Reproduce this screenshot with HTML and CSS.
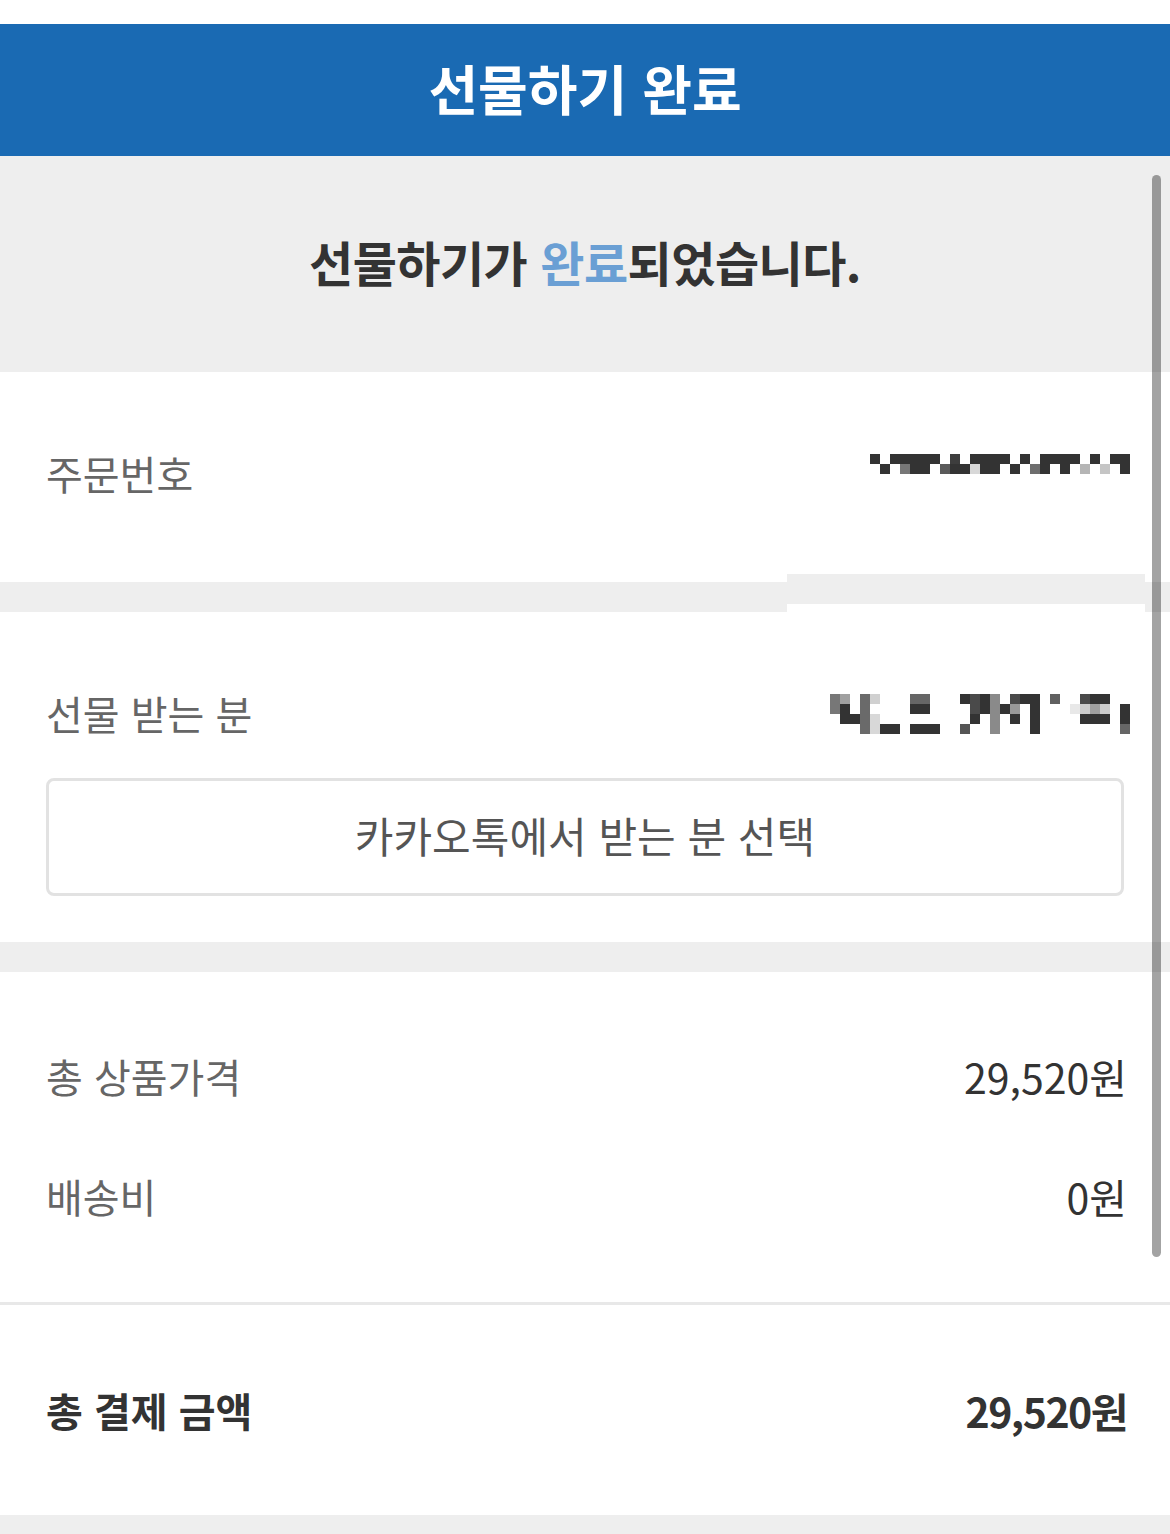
FILE: index.html
```html
<!DOCTYPE html>
<html lang="ko">
<head>
  <meta charset="UTF-8">
  <meta name="viewport" content="width=device-width, initial-scale=1.0">
  <title>선물하기 완료</title>
  <link rel="stylesheet" href="styles.css">
</head>
<body>
  <div class="page">
    <div class="top-gap"></div>
    <header class="title-bar">
      <h1>선물하기 완료</h1>
    </header>

    <div class="notice">
      <p>선물하기가 <span class="accent">완료</span>되었습니다.</p>
    </div>

    <section class="block block-order">
      <div class="row">
        <span class="label">주문번호</span>
        <svg class="mosaic mosaic-order" width="260" height="20" viewBox="0 0 260 20">
          <rect x="0" y="0" width="10" height="10" fill="#333"/>
          <rect x="20" y="0" width="50" height="10" fill="#333"/>
          <rect x="80" y="0" width="10" height="10" fill="#3d3d3d"/>
          <rect x="100" y="0" width="40" height="10" fill="#333"/>
          <rect x="150" y="0" width="10" height="10" fill="#333"/>
          <rect x="170" y="0" width="40" height="10" fill="#333"/>
          <rect x="220" y="0" width="10" height="10" fill="#333"/>
          <rect x="240" y="0" width="20" height="10" fill="#333"/>
          <rect x="10" y="10" width="10" height="10" fill="#333"/>
          <rect x="30" y="10" width="10" height="10" fill="#777"/>
          <rect x="40" y="10" width="20" height="10" fill="#333"/>
          <rect x="70" y="10" width="10" height="10" fill="#5a5a5a"/>
          <rect x="80" y="10" width="20" height="10" fill="#333"/>
          <rect x="100" y="10" width="10" height="10" fill="#d8d8d8"/>
          <rect x="110" y="10" width="20" height="10" fill="#333"/>
          <rect x="140" y="10" width="10" height="10" fill="#333"/>
          <rect x="160" y="10" width="10" height="10" fill="#6e6e6e"/>
          <rect x="170" y="10" width="10" height="10" fill="#333"/>
          <rect x="190" y="10" width="10" height="10" fill="#333"/>
          <rect x="210" y="10" width="10" height="10" fill="#b5b5b5"/>
          <rect x="230" y="10" width="10" height="10" fill="#c5c5c5"/>
          <rect x="250" y="10" width="10" height="10" fill="#333"/>
        </svg>
      </div>
    </section>

    <div class="divider divider-glitch"></div>

    <section class="block block-recipient">
      <div class="row">
        <span class="label">선물 받는 분</span>
        <svg class="mosaic mosaic-name" width="300" height="40" viewBox="0 0 300 40">
          <rect x="0" y="0" width="10" height="10" fill="#777"/>
          <rect x="10" y="0" width="10" height="10" fill="#a0a0a0"/>
          <rect x="30" y="0" width="10" height="10" fill="#6a6a6a"/>
          <rect x="40" y="0" width="10" height="10" fill="#d0d0d0"/>
          <rect x="80" y="0" width="20" height="10" fill="#666"/>
          <rect x="130" y="0" width="10" height="10" fill="#333"/>
          <rect x="140" y="0" width="10" height="10" fill="#4a4a4a"/>
          <rect x="150" y="0" width="10" height="10" fill="#333"/>
          <rect x="160" y="0" width="10" height="10" fill="#8a8a8a"/>
          <rect x="180" y="0" width="10" height="10" fill="#4a4a4a"/>
          <rect x="190" y="0" width="20" height="10" fill="#333"/>
          <rect x="220" y="0" width="10" height="10" fill="#606060"/>
          <rect x="250" y="0" width="10" height="10" fill="#4a4a4a"/>
          <rect x="260" y="0" width="20" height="10" fill="#333"/>

          <rect x="0" y="10" width="10" height="10" fill="#777"/>
          <rect x="10" y="10" width="10" height="10" fill="#333"/>
          <rect x="30" y="10" width="10" height="10" fill="#6a6a6a"/>
          <rect x="80" y="10" width="20" height="10" fill="#333"/>
          <rect x="140" y="10" width="10" height="10" fill="#4a4a4a"/>
          <rect x="150" y="10" width="10" height="10" fill="#333"/>
          <rect x="160" y="10" width="10" height="10" fill="#8a8a8a"/>
          <rect x="170" y="10" width="10" height="10" fill="#333"/>
          <rect x="180" y="10" width="10" height="10" fill="#999"/>
          <rect x="200" y="10" width="10" height="10" fill="#333"/>
          <rect x="240" y="10" width="10" height="10" fill="#e8e8e8"/>
          <rect x="250" y="10" width="10" height="10" fill="#ccc"/>
          <rect x="260" y="10" width="10" height="10" fill="#a0a0a0"/>
          <rect x="270" y="10" width="10" height="10" fill="#ccc"/>
          <rect x="290" y="10" width="10" height="10" fill="#333"/>

          <rect x="10" y="20" width="20" height="10" fill="#333"/>
          <rect x="30" y="20" width="10" height="10" fill="#6a6a6a"/>
          <rect x="40" y="20" width="10" height="10" fill="#d8d8d8"/>
          <rect x="140" y="20" width="10" height="10" fill="#333"/>
          <rect x="160" y="20" width="10" height="10" fill="#8a8a8a"/>
          <rect x="180" y="20" width="10" height="10" fill="#333"/>
          <rect x="200" y="20" width="10" height="10" fill="#333"/>
          <rect x="250" y="20" width="30" height="10" fill="#333"/>
          <rect x="290" y="20" width="10" height="10" fill="#333"/>

          <rect x="30" y="30" width="10" height="10" fill="#6a6a6a"/>
          <rect x="40" y="30" width="10" height="10" fill="#d8d8d8"/>
          <rect x="50" y="30" width="20" height="10" fill="#333"/>
          <rect x="80" y="30" width="30" height="10" fill="#333"/>
          <rect x="130" y="30" width="10" height="10" fill="#555"/>
          <rect x="160" y="30" width="10" height="10" fill="#8a8a8a"/>
          <rect x="200" y="30" width="10" height="10" fill="#333"/>
          <rect x="290" y="30" width="10" height="10" fill="#666"/>
        </svg>
      </div>
      <button class="pick-btn" type="button">카카오톡에서 받는 분 선택</button>
    </section>

    <div class="divider"></div>

    <section class="block block-price">
      <div class="row">
        <span class="label">총 상품가격</span>
        <span class="value">29,520원</span>
      </div>
      <div class="row">
        <span class="label">배송비</span>
        <span class="value">0원</span>
      </div>
    </section>

    <div class="rule"></div>

    <section class="block block-total">
      <div class="row">
        <span class="label total">총 결제 금액</span>
        <span class="value total">29,520원</span>
      </div>
    </section>

    <div class="footer-fill"></div>

    <div class="scrollbar"></div>
  </div>
</body>
</html>
```

FILE: styles.css
```css
* {
  box-sizing: border-box;
}
body {
  margin: 0;
  background: #fff;
  font-family: "Noto Sans CJK KR", "Noto Sans", sans-serif;
  color: #333;
}
.page {
  position: relative;
  width: 1170px;
  min-height: 1534px;
  overflow: hidden;
}
.top-gap {
  height: 24px;
  background: #fff;
}
.title-bar {
  height: 132px;
  background: #1a6ab3;
  display: flex;
  align-items: center;
  justify-content: center;
}
.title-bar h1 {
  margin: 0 0 4px;
  color: #fff;
  font-size: 54px;
  font-weight: 700;
  line-height: 1;
}
.notice {
  height: 216px;
  background: #eee;
  display: flex;
  align-items: center;
  justify-content: center;
}
.notice p {
  margin: 0 0 6px;
  font-size: 48px;
  font-weight: 700;
  letter-spacing: -0.5px;
  color: #333;
}
.accent {
  color: #6a9fd4;
}
.block {
  background: #fff;
  padding: 0 46px;
}
.row {
  display: flex;
  justify-content: space-between;
  align-items: center;
  height: 50px;
}
.label {
  font-size: 40px;
  color: #666;
  line-height: 48px;
}
.value {
  font-size: 41px;
  color: #333;
  line-height: 48px;
  margin-right: -3px;
}
.label.total,
.value.total {
  font-weight: 700;
  color: #333;
}
.value.total {
  letter-spacing: -1.5px;
}
.block-order {
  padding-top: 77px;
  padding-bottom: 83px;
}
.block-order .row,
.block-recipient .row {
  align-items: flex-start;
}
.mosaic {
  display: block;
  margin-top: 5px;
  margin-right: -6px;
}
.block-recipient {
  padding-top: 77px;
  padding-bottom: 46px;
}
.pick-btn {
  display: block;
  width: 100%;
  height: 118px;
  margin-top: 39px;
  background: #fff;
  border: 3px solid #e2e2e2;
  border-radius: 8px;
  font-family: inherit;
  font-size: 42px;
  color: #555;
  padding-bottom: 6px;
}
.divider {
  height: 30px;
  background: #eee;
}
.divider-glitch {
  position: relative;
}
.divider-glitch::before {
  content: "";
  position: absolute;
  left: 787px;
  width: 358px;
  top: 22px;
  height: 8px;
  background: #fff;
}
.divider-glitch::after {
  content: "";
  position: absolute;
  left: 787px;
  width: 358px;
  top: -8px;
  height: 30px;
  background: #eee;
}
.block-price {
  padding-top: 79px;
  padding-bottom: 81px;
  display: flex;
  flex-direction: column;
  gap: 70px;
}
.rule {
  height: 3px;
  background: #e8e8e8;
}
.block-total {
  padding-top: 80px;
  padding-bottom: 80px;
}
.footer-fill {
  height: 19px;
  background: #eee;
}
.scrollbar {
  position: absolute;
  left: 1152px;
  top: 175px;
  width: 9px;
  height: 1082px;
  border-radius: 5px;
  background: rgba(0, 0, 0, 0.36);
}
```
